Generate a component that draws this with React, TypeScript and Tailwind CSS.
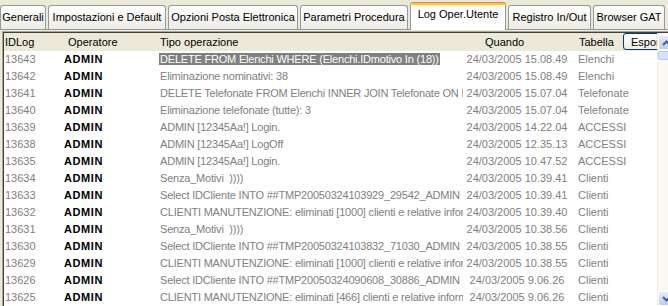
import React from 'react';

type Row = { id: string; op: string; tipo: string; quando: string; tab: string; sel?: boolean };

const rows: Row[] = [
  { id: '13643', op: 'ADMIN', tipo: 'DELETE FROM Elenchi WHERE (Elenchi.IDmotivo In (18))', quando: '24/03/2005 15.08.49', tab: 'Elenchi', sel: true },
  { id: '13642', op: 'ADMIN', tipo: 'Eliminazione nominativi: 38', quando: '24/03/2005 15.08.49', tab: 'Elenchi' },
  { id: '13641', op: 'ADMIN', tipo: 'DELETE Telefonate FROM Elenchi INNER JOIN Telefonate ON Elenchi.IDElenco = Telefonate.IDElenco', quando: '24/03/2005 15.07.04', tab: 'Telefonate' },
  { id: '13640', op: 'ADMIN', tipo: 'Eliminazione telefonate (tutte): 3', quando: '24/03/2005 15.07.04', tab: 'Telefonate' },
  { id: '13639', op: 'ADMIN', tipo: 'ADMIN [12345Aa!] Login.', quando: '24/03/2005 14.22.04', tab: 'ACCESSI' },
  { id: '13638', op: 'ADMIN', tipo: 'ADMIN [12345Aa!] LogOff', quando: '24/03/2005 12.35.13', tab: 'ACCESSI' },
  { id: '13635', op: 'ADMIN', tipo: 'ADMIN [12345Aa!] Login.', quando: '24/03/2005 10.47.52', tab: 'ACCESSI' },
  { id: '13634', op: 'ADMIN', tipo: 'Senza_Motivi  ))))', quando: '24/03/2005 10.39.41', tab: 'Clienti' },
  { id: '13633', op: 'ADMIN', tipo: 'Select IDCliente INTO ##TMP20050324103929_29542_ADMIN FROM Clienti', quando: '24/03/2005 10.39.41', tab: 'Clienti' },
  { id: '13632', op: 'ADMIN', tipo: 'CLIENTI MANUTENZIONE: eliminati [1000] clienti e relative informazioni', quando: '24/03/2005 10.39.40', tab: 'Clienti' },
  { id: '13631', op: 'ADMIN', tipo: 'Senza_Motivi  ))))', quando: '24/03/2005 10.38.56', tab: 'Clienti' },
  { id: '13630', op: 'ADMIN', tipo: 'Select IDCliente INTO ##TMP20050324103832_71030_ADMIN FROM Clienti', quando: '24/03/2005 10.38.55', tab: 'Clienti' },
  { id: '13629', op: 'ADMIN', tipo: 'CLIENTI MANUTENZIONE: eliminati [1000] clienti e relative informazioni', quando: '24/03/2005 10.38.55', tab: 'Clienti' },
  { id: '13626', op: 'ADMIN', tipo: 'Select IDCliente INTO ##TMP20050324090608_30886_ADMIN FROM Clienti', quando: '24/03/2005 9.06.26', tab: 'Clienti' },
  { id: '13625', op: 'ADMIN', tipo: 'CLIENTI MANUTENZIONE: eliminati [466] clienti e relative informazioni', quando: '24/03/2005 9.06.26', tab: 'Clienti' },
];

// widths measured off the screenshot
const tabs = [
  { label: 'Generali', w: 'w-[46px]' },
  { label: 'Impostazioni e Default', w: 'w-[118px]' },
  { label: 'Opzioni Posta Elettronica', w: 'w-[130px]' },
  { label: 'Parametri Procedura', w: 'w-[108px]' },
  { label: 'Log Oper.Utente', w: 'w-[96px]', active: true },
  { label: 'Registro In/Out', w: 'w-[83px]' },
  { label: 'Browser GAT', w: 'w-[72px]' },
];

const Tab = ({ label, w, active }: { label: string; w: string; active?: boolean }) =>
  active ? (
    <div className={`relative -mb-px h-[28px] shrink-0 whitespace-nowrap rounded-t-[3px] border-x border-[#919B9C] bg-white pt-[4px] text-center text-[11px] text-black ${w}`}>
      <div className="absolute inset-x-[-1px] top-0 h-[3px] rounded-t-[3px] border-t border-[#E68B2C] bg-[#FFC83C]" />
      {label}
    </div>
  ) : (
    <div className={`h-[24px] shrink-0 whitespace-nowrap rounded-t-[3px] border border-b-0 border-[#919B9C] bg-gradient-to-b from-white to-[#ECEBE6] pt-[3px] text-center text-[11px] text-black ${w}`}>
      {label}
    </div>
  );

const Chevron = ({ up }: { up?: boolean }) => (
  <svg width="9" height="6" viewBox="0 0 9 6">
    <path d={up ? 'M1 5 L4.5 1.5 L8 5' : 'M1 1 L4.5 4.5 L8 1'} fill="none" stroke="#4D6185" strokeWidth="2" />
  </svg>
);

export default function App() {
  return (
    <div className="h-[306px] w-[668px] overflow-hidden bg-[#ECE9D8] font-['Liberation_Sans',Arial,sans-serif]">
      {/* tab strip */}
      <div className="flex h-[30px] items-end gap-[2px] border-b border-[#919B9C]">
        {tabs.map((t) => (
          <Tab key={t.label} label={t.label} w={t.w} active={t.active} />
        ))}
      </div>

      {/* grid */}
      <div className="ml-[2px] mt-px w-[672px] border-l border-t border-[#ACA899]">
        <div className="relative flex border-l border-t border-[#404040]">
          <div className="flex-1 overflow-hidden text-[11px]">
            {/* header */}
            <div className="flex h-[18px] items-center bg-[#ECE9D8] text-black">
              <div className="w-[59px] shrink-0 pl-[1px]">IDLog</div>
              <div className="w-[94px] shrink-0 pl-[5px]">Operatore</div>
              <div className="w-[306px] shrink-0 pl-[3px]">Tipo operazione</div>
              <div className="w-[108px] shrink-0 pl-[22px]">Quando</div>
              <div className="shrink-0 pl-[8px]">Tabella</div>
            </div>
            {/* body */}
            <div className="bg-white">
              {rows.map((r) => (
                <div key={r.id} className="flex h-[17px] items-center whitespace-pre text-[#808080]">
                  <div className="w-[59px] shrink-0 pl-[1px]">{r.id}</div>
                  <div className="w-[94px] shrink-0 pl-[1px] font-bold tracking-[0.6px] text-black">{r.op}</div>
                  <div className="w-[306px] shrink-0 overflow-hidden pl-[2px] tracking-[-0.2px]">
                    {r.sel ? <span className="bg-[#808080] px-px text-white">{r.tipo}</span> : <span className="px-px">{r.tipo}</span>}
                  </div>
                  <div className="w-[108px] shrink-0 text-center">{r.quando}</div>
                  <div className="shrink-0 pl-[7px]">{r.tab}</div>
                </div>
              ))}
            </div>
          </div>

          {/* export button, half hidden by the scrollbar */}
          <button className="absolute left-[619px] top-0 h-[17px] w-[44px] overflow-hidden rounded-[3px] border border-[#003C74] bg-gradient-to-b from-white to-[#ECEBE6] pl-[7px] text-left text-[11px] text-black">
            Esporta
          </button>

          {/* scrollbar */}
          <div className="relative z-10 flex w-[17px] shrink-0 flex-col border-l border-[#EEEDE5] bg-[#FAF9F3] pt-[2px]">
            <div className="flex h-[15px] items-center justify-center rounded-[2px] border border-white bg-gradient-to-b from-[#E3EBFD] to-[#BCCEF7]">
              <Chevron up />
            </div>
            <div className="mt-px h-[9px] rounded-[2px] border border-[#B5C8F5] bg-[#D6E1FB]" />
            <div className="flex-1" />
            <div className="flex h-[15px] items-center justify-center rounded-[2px] border border-white bg-gradient-to-b from-[#E3EBFD] to-[#BCCEF7]">
              <Chevron />
            </div>
          </div>
        </div>
      </div>
    </div>
  );
}
